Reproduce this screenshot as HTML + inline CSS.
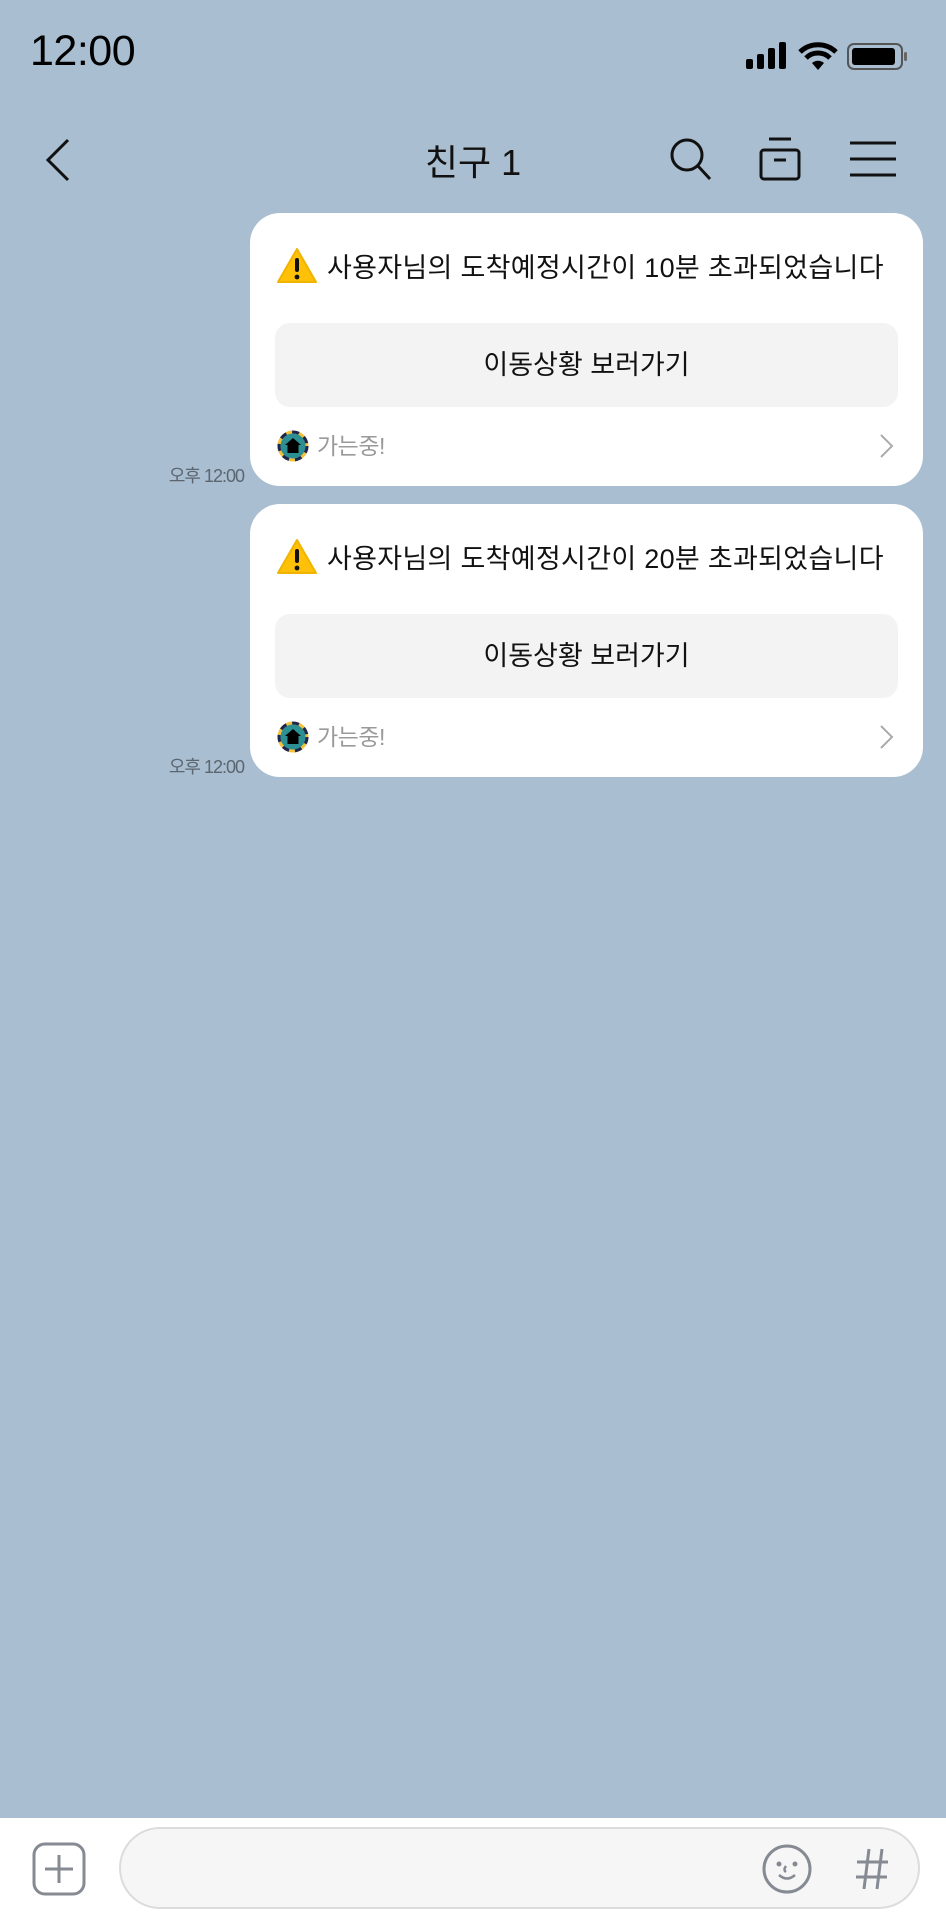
<!DOCTYPE html>
<html><head><meta charset="utf-8"><style>
*{margin:0;padding:0;box-sizing:border-box}
body{width:946px;height:1920px;background:#a9bed0;position:relative;overflow:hidden;font-family:"Liberation Sans","Noto Sans CJK KR",sans-serif;color:#111}
.abs{position:absolute}
.bubble{position:absolute;left:250px;width:673px;height:273px;background:#fff;border-radius:30px}
.msg{position:absolute;left:77px;top:33px;font-size:27px;letter-spacing:0.3px;white-space:nowrap;color:#111}
.btn{position:absolute;left:25px;top:110px;width:623px;height:84px;background:#f3f3f3;border-radius:15px;text-align:center;line-height:84px;font-size:27px;letter-spacing:0px}
.go{position:absolute;left:67px;top:214px;font-size:23px;color:#9a9a9a;letter-spacing:-0.5px}
.time{position:absolute;right:702px;font-size:18px;color:#5c6670;letter-spacing:-1px;white-space:nowrap}
</style></head><body>
<div class="abs" style="left:30px;top:27px;font-size:43px;letter-spacing:-0.5px;color:#000">12:00</div>
<svg class="abs" style="left:744px;top:40px" width="166" height="32" viewBox="0 0 166 32">
<rect x="2" y="19" width="7" height="10" rx="2" fill="#000"/>
<rect x="13" y="14" width="7" height="15" rx="2" fill="#000"/>
<rect x="24" y="8" width="7" height="21" rx="2" fill="#000"/>
<rect x="35" y="2" width="7" height="27" rx="2" fill="#000"/>
<path d="M56 12 A26 26 0 0 1 92 12" stroke="#000" stroke-width="5" fill="none"/>
<path d="M62 18 A17 17 0 0 1 86 18" stroke="#000" stroke-width="5" fill="none"/>
<path d="M68 23 L74 30 L80 23 A9 9 0 0 0 68 23Z" fill="#000"/>
<rect x="104" y="4" width="54" height="25" rx="6" stroke="#555" stroke-width="2" fill="none"/>
<rect x="108" y="8" width="43" height="17" rx="3" fill="#000"/>
<rect x="160" y="12" width="3" height="9" rx="1.5" fill="#666"/>
</svg>
<svg class="abs" style="left:40px;top:137px" width="34" height="46"><path d="M28 3 L8 23 L28 43" stroke="#111" stroke-width="3" fill="none"/></svg>
<div class="abs" style="left:0;width:946px;top:134px;text-align:center;font-size:36px;color:#111">친구 1</div>
<svg class="abs" style="left:668px;top:136px" width="46" height="46"><circle cx="19" cy="19" r="15" stroke="#111" stroke-width="3" fill="none"/><path d="M30 30 L42 43" stroke="#111" stroke-width="3"/></svg>
<svg class="abs" style="left:758px;top:136px" width="46" height="46"><rect x="3" y="14" width="38" height="29" rx="3" stroke="#111" stroke-width="3" fill="none"/><path d="M11 3H33M16 24H28" stroke="#111" stroke-width="3"/></svg>
<svg class="abs" style="left:848px;top:138px" width="50" height="40"><path d="M2 5H48M2 21H48M2 37H48" stroke="#111" stroke-width="3"/></svg>

<div class="bubble" style="top:213px">
<svg class="abs" style="left:26px;top:34px" width="42" height="38" viewBox="0 0 42 38"><path d="M21 2 L40 35 H2 Z" fill="#ffc107" stroke="#f0b400" stroke-width="2" stroke-linejoin="round"/><rect x="19" y="11" width="4" height="14" rx="2" fill="#111"/><circle cx="21" cy="30" r="2.4" fill="#111"/></svg>
<div class="msg">사용자님의 도착예정시간이 10분 초과되었습니다</div>
<div class="btn">이동상황 보러가기</div>
<svg class="abs" style="left:27px;top:217px" width="32" height="32"><circle cx="16" cy="16" r="14" fill="#2b8f93" stroke="#f5c13a" stroke-width="3"/><circle cx="16" cy="16" r="14" fill="none" stroke="#1d2650" stroke-width="3" stroke-dasharray="7 6"/><path d="M16 8 L24 15 H21.5 V23 H10.5 V15 H8 Z" fill="#000"/></svg>
<div class="go">가는중!</div>
<svg class="abs" style="left:628px;top:220px" width="18" height="26"><path d="M3 2 L14 13 L3 24" stroke="#aaa" stroke-width="2" fill="none"/></svg>
</div>
<div class="time" style="top:462px">오후 12:00</div>

<div class="bubble" style="top:504px">
<svg class="abs" style="left:26px;top:34px" width="42" height="38" viewBox="0 0 42 38"><path d="M21 2 L40 35 H2 Z" fill="#ffc107" stroke="#f0b400" stroke-width="2" stroke-linejoin="round"/><rect x="19" y="11" width="4" height="14" rx="2" fill="#111"/><circle cx="21" cy="30" r="2.4" fill="#111"/></svg>
<div class="msg">사용자님의 도착예정시간이 20분 초과되었습니다</div>
<div class="btn">이동상황 보러가기</div>
<svg class="abs" style="left:27px;top:217px" width="32" height="32"><circle cx="16" cy="16" r="14" fill="#2b8f93" stroke="#f5c13a" stroke-width="3"/><circle cx="16" cy="16" r="14" fill="none" stroke="#1d2650" stroke-width="3" stroke-dasharray="7 6"/><path d="M16 8 L24 15 H21.5 V23 H10.5 V15 H8 Z" fill="#000"/></svg>
<div class="go">가는중!</div>
<svg class="abs" style="left:628px;top:220px" width="18" height="26"><path d="M3 2 L14 13 L3 24" stroke="#aaa" stroke-width="2" fill="none"/></svg>
</div>
<div class="time" style="top:753px">오후 12:00</div>

<div class="abs" style="left:0;top:1818px;width:946px;height:102px;background:#fff"></div>
<svg class="abs" style="left:31px;top:1841px" width="56" height="56"><rect x="3" y="3" width="50" height="50" rx="11" stroke="#858a93" stroke-width="3" fill="none"/><path d="M28 14V42M14 28H42" stroke="#858a93" stroke-width="3"/></svg>
<div class="abs" style="left:119px;top:1827px;width:801px;height:82px;border-radius:41px;background:#f6f6f6;border:2px solid #dcdcdc"></div>
<svg class="abs" style="left:760px;top:1842px" width="54" height="54"><circle cx="27" cy="27" r="23" stroke="#858a93" stroke-width="3" fill="none"/><circle cx="19" cy="22" r="2.5" fill="#858a93"/><circle cx="35" cy="22" r="2.5" fill="#858a93"/><path d="M26 24 Q23 28 26 30 M19 33 Q27 40 35 33" stroke="#858a93" stroke-width="2.5" fill="none"/></svg>
<svg class="abs" style="left:852px;top:1846px" width="40" height="46"><path d="M17 3L12 43M30 3L25 43M5 16H36M4 31H35" stroke="#858a93" stroke-width="3"/></svg>
</body></html>
